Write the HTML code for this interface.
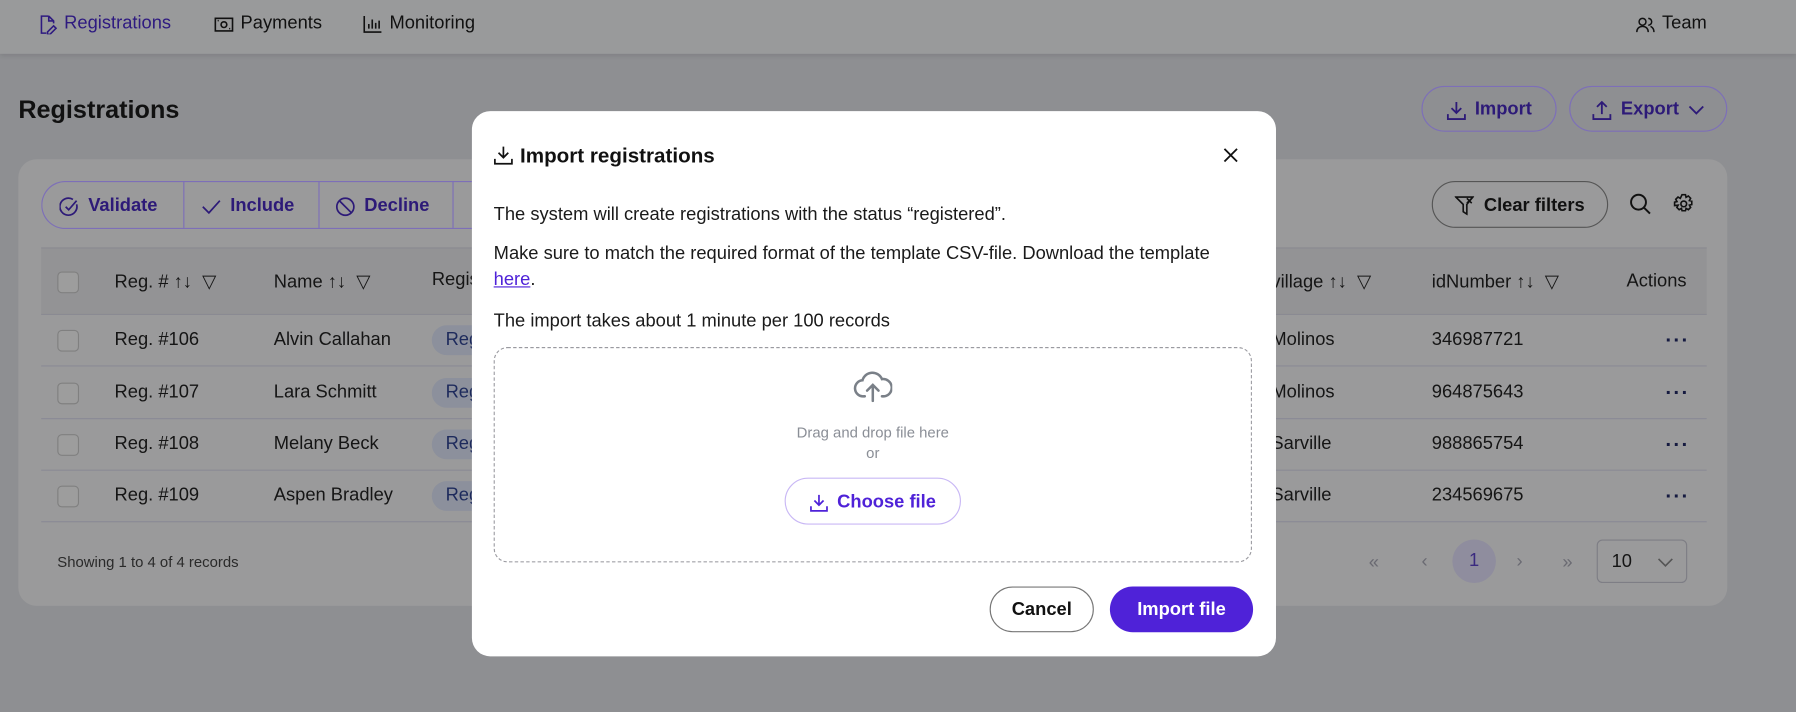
<!DOCTYPE html>
<html><head><meta charset="utf-8"><style>
html,body{margin:0;padding:0;width:1796px;height:712px;overflow:hidden;background:#8e8f92;font-family:"Liberation Sans",sans-serif}
#s{position:absolute;left:0;top:0;width:1568px;height:622px;transform:scale(1.14541);transform-origin:0 0;background:#8e8f92}
.a{position:absolute}
.nav{left:0;top:0;width:1568px;height:47px;background:#999a9b;box-shadow:0 2px 4px rgba(0,0,0,.1)}
.ni{position:absolute;top:12px;font-size:16px;color:#111;display:flex;align-items:center;gap:6px}
.pill{position:absolute;border:1px solid #7d6fb8;border-radius:22px;display:flex;align-items:center;justify-content:center;gap:8px;font-weight:bold;font-size:16px;color:#2d1a78;box-sizing:border-box;padding-top:2px}
.card{left:16px;top:139px;width:1492px;height:390px;background:#9a9a9b;border-radius:16px}
.th{left:36px;top:216px;width:1454px;height:57px;background:#939395;border-top:1px solid #8a8a92;border-bottom:1px solid #8a8a92}
.row{left:36px;width:1454px;height:45px;border-bottom:1px solid #8a8a95}
.t{position:absolute;font-size:16px;color:#151515;white-space:nowrap}
.cb{position:absolute;left:14px;width:17px;height:17px;border:1px solid #808080;border-radius:4px;background:#9d9d9d}
.tag{position:absolute;left:341px;top:10px;width:60px;height:26px;border-radius:13px;background:#8c909c;color:#1d2a5c;font-size:16px;line-height:26px;padding-left:12px;box-sizing:border-box}
.dots{position:absolute;left:1418px;font-size:18px;color:#151a40;font-weight:bold;letter-spacing:1px}
.modal{left:412px;top:97px;width:702px;height:476px;background:#fff;border-radius:16px}
.mt{position:absolute;font-size:16px;color:#1a1a1a;white-space:nowrap}
</style></head><body><div id="s">
<div class="a nav">
 <div class="ni" style="left:33px;color:#2e1a80"><svg width="17" height="17" viewBox="0 0 16 16" fill="none" stroke="#2e1a80" stroke-width="1.3"><path d="M9 1H3v14h4M9 1l4 4v2M9 1v4h4M8 14l5-5 2 2-5 5H8z"/></svg>Registrations</div>
 <div class="ni" style="left:187px"><svg width="17" height="15" viewBox="0 0 17 15" fill="none" stroke="#111" stroke-width="1.4"><rect x="1" y="2" width="15" height="11"/><circle cx="8.5" cy="7.5" r="2.5"/><path d="M3 4h1M13 11h1"/></svg>Payments</div>
 <div class="ni" style="left:317px"><svg width="17" height="16" viewBox="0 0 17 16" fill="none" stroke="#111" stroke-width="1.4"><path d="M1 1v14h15M5 12V8M8 12V4M11 12V7M14 12V5"/></svg>Monitoring</div>
 <div class="ni" style="left:1428px"><svg width="17" height="15" viewBox="0 0 17 15" fill="none" stroke="#111" stroke-width="1.3"><circle cx="6" cy="5" r="3"/><path d="M1 14c0-3 2-5 5-5s5 2 5 5M11 2a3 3 0 010 6M13 9c2 1 3 3 3 5"/></svg>Team</div>
</div>
<div class="a" style="left:16px;top:83px;font-size:22px;font-weight:bold;color:#111">Registrations</div>
<div class="pill" style="left:1241px;top:75px;width:118px;height:40px"><svg width="17" height="17" viewBox="0 0 16 16" fill="none" stroke="#2d1a78" stroke-width="1.5"><path d="M8 1v9M4 6l4 4 4-4M1 11v4h14v-4"/></svg>Import</div>
<div class="pill" style="left:1370px;top:75px;width:138px;height:40px"><svg width="17" height="17" viewBox="0 0 16 16" fill="none" stroke="#2d1a78" stroke-width="1.5"><path d="M8 11V2M4 5l4-4 4 4M1 11v4h14v-4"/></svg>Export<svg width="14" height="10" viewBox="0 0 14 10" fill="none" stroke="#2d1a78" stroke-width="1.6"><path d="M1 2l6 6 6-6"/></svg></div>
<div class="a card"></div>
<div class="a" style="left:36px;top:158px;width:400px;height:40px;border:1px solid #7d6fb8;border-radius:22px 0 0 22px;border-right:none"></div>
<div class="a" style="left:160px;top:158px;width:1px;height:41px;background:#7d6fb8"></div>
<div class="a" style="left:278px;top:158px;width:1px;height:41px;background:#7d6fb8"></div>
<div class="a" style="left:395px;top:158px;width:1px;height:41px;background:#7d6fb8"></div>
<div class="pill" style="left:52px;top:159px;height:40px;border:none"><svg width="17" height="17" viewBox="0 0 16 16" fill="none" stroke="#2d1a78" stroke-width="1.4"><path d="M14 6a7 7 0 11-3-4M5 8l2.5 2.5L14 3"/></svg>Validate</div>
<div class="pill" style="left:176px;top:159px;height:40px;border:none"><svg width="17" height="13" viewBox="0 0 16 12" fill="none" stroke="#2d1a78" stroke-width="1.4"><path d="M1 6l5 5L15 1"/></svg>Include</div>
<div class="pill" style="left:293px;top:159px;height:40px;border:none"><svg width="17" height="17" viewBox="0 0 16 16" fill="none" stroke="#2d1a78" stroke-width="1.4"><circle cx="8" cy="8" r="7"/><path d="M3 3l10 10"/></svg>Decline</div>
<div class="pill" style="left:1250px;top:158px;width:154px;height:41px;border-color:#555;color:#111"><svg width="17" height="17" viewBox="0 0 16 16" fill="none" stroke="#111" stroke-width="1.3"><path d="M1 1h14l-5 6v8l-3-2V7zM10 2l4 4M14 2l-4 4"/></svg>Clear filters</div>
<svg class="a" style="left:1422px;top:168px" width="20" height="20" viewBox="0 0 20 20" fill="none" stroke="#111" stroke-width="1.7"><circle cx="8.5" cy="8.5" r="6.5"/><path d="M13.5 13.5l5 5"/></svg>
<svg class="a" style="left:1461px;top:169px" width="18" height="18" viewBox="0 0 18 18" fill="none" stroke="#111" stroke-width="1.4"><circle cx="9" cy="9" r="2.5"/><path d="M7.5 1h3l.5 2.3 2-1.2 2 2-1.1 2 2.1.5v3l-2.1.5 1.1 2-2 2-2-1.2-.5 2.1h-3l-.5-2.1-2 1.2-2-2 1.1-2L1 10.5v-3l2.1-.5-1.1-2 2-2 2 1.2z"/></svg>
<div class="a th">
 <div class="cb" style="top:20px"></div>
 <div class="t" style="left:64px;top:19px">Reg. # ↑↓ &nbsp;▽</div>
 <div class="t" style="left:203px;top:19px">Name ↑↓ &nbsp;▽</div>
 <div class="t" style="left:341px;top:19px">Regis</div>
 <div class="t" style="left:1074px;top:19px">village ↑↓ &nbsp;▽</div>
 <div class="t" style="left:1214px;top:19px">idNumber ↑↓ &nbsp;▽</div>
 <div class="t" style="left:1384px;top:20px">Actions</div>
</div>
<div class="a row" style="top:274px"><div class="cb" style="top:14px"></div><div class="t" style="left:64px;top:14px">Reg. #106</div><div class="t" style="left:203px;top:14px">Alvin Callahan</div><div class="tag">Reg</div><div class="t" style="left:1074px;top:14px">Molinos</div><div class="t" style="left:1214px;top:14px">346987721</div><div class="dots" style="left:1418px;top:13px">···</div></div>
<div class="a row" style="top:320px"><div class="cb" style="top:14px"></div><div class="t" style="left:64px;top:14px">Reg. #107</div><div class="t" style="left:203px;top:14px">Lara Schmitt</div><div class="tag">Reg</div><div class="t" style="left:1074px;top:14px">Molinos</div><div class="t" style="left:1214px;top:14px">964875643</div><div class="dots" style="left:1418px;top:13px">···</div></div>
<div class="a row" style="top:365px"><div class="cb" style="top:14px"></div><div class="t" style="left:64px;top:14px">Reg. #108</div><div class="t" style="left:203px;top:14px">Melany Beck</div><div class="tag">Reg</div><div class="t" style="left:1074px;top:14px">Sarville</div><div class="t" style="left:1214px;top:14px">988865754</div><div class="dots" style="left:1418px;top:13px">···</div></div>
<div class="a row" style="top:410px"><div class="cb" style="top:14px"></div><div class="t" style="left:64px;top:14px">Reg. #109</div><div class="t" style="left:203px;top:14px">Aspen Bradley</div><div class="tag">Reg</div><div class="t" style="left:1074px;top:14px">Sarville</div><div class="t" style="left:1214px;top:14px">234569675</div><div class="dots" style="left:1418px;top:13px">···</div></div>
<div class="a" style="left:50px;top:483px;font-size:13px;color:#2a2a2a">Showing 1 to 4 of 4 records</div>
<div class="a" style="left:1195px;top:483px;font-size:16px;color:#6a6a72">«</div>
<div class="a" style="left:1241px;top:482px;font-size:16px;color:#6a6a72">‹</div>
<div class="a" style="left:1268px;top:471px;width:38px;height:38px;border-radius:50%;background:#8f8d9e;color:#3a2a80;font-size:16px;line-height:38px;text-align:center">1</div>
<div class="a" style="left:1324px;top:482px;font-size:16px;color:#6a6a72">›</div>
<div class="a" style="left:1364px;top:483px;font-size:16px;color:#6a6a72">»</div>
<div class="a" style="left:1394px;top:471px;width:79px;height:38px;border:1px solid #7e7e85;border-radius:5px;box-sizing:border-box"><span class="a" style="left:12px;top:10px;font-size:16px;color:#151515">10</span><svg class="a" style="left:52px;top:15px" width="14" height="9" viewBox="0 0 14 9" fill="none" stroke="#555" stroke-width="1.4"><path d="M1 1l6 6 6-6"/></svg></div>

<div class="a modal">
 <svg class="a" style="left:19px;top:30px" width="17" height="17" viewBox="0 0 16 16" fill="none" stroke="#111" stroke-width="1.4"><path d="M8 1v9M4 6l4 4 4-4M1 11v4h14v-4"/></svg>
 <div class="a" style="left:42px;top:29px;font-size:18px;font-weight:bold;color:#111">Import registrations</div>
 <svg class="a" style="left:656px;top:32px" width="13" height="13" viewBox="0 0 13 13" stroke="#111" stroke-width="1.6"><path d="M1 1l11 11M12 1L1 12"/></svg>
 <div class="mt" style="left:19px;top:82px">The system will create registrations with the status “registered”.</div>
 <div class="mt" style="left:19px;top:116px">Make sure to match the required format of the template CSV-file. Download the template</div>
 <div class="mt" style="left:19px;top:139px"><span style="color:#4f22d8;text-decoration:underline">here</span>.</div>
 <div class="mt" style="left:19px;top:175px">The import takes about 1 minute per 100 records</div>
 <div class="a" style="left:19px;top:206px;width:662px;height:188px;border:1px dashed #9a9aa0;border-radius:12px;box-sizing:border-box">
  <svg class="a" style="left:313px;top:18px" width="34" height="30" viewBox="0 0 34 30" fill="none" stroke="#7a8088" stroke-width="2.2" stroke-linecap="round"><path d="M10 24H9a7 7 0 01-1-14 9 9 0 0117-1 7.5 7.5 0 012 15h-2"/><path d="M17 28V15M12 19l5-5 5 5"/></svg>
  <div class="a" style="left:0;width:660px;top:65px;text-align:center;font-size:13px;color:#8a8e96;line-height:18px">Drag and drop file here<br>or</div>
  <div class="pill" style="left:253px;top:113px;width:154px;height:41px;border-color:#c9b8f5;color:#4f22d8"><svg width="16" height="16" viewBox="0 0 16 16" fill="none" stroke="#4f22d8" stroke-width="1.5"><path d="M8 1v9M4 6l4 4 4-4M1 11v4h14v-4"/></svg>Choose file</div>
 </div>
 <div class="pill" style="left:452px;top:415px;width:91px;height:40px;border-color:#777;color:#111">Cancel</div>
 <div class="pill" style="left:557px;top:415px;width:125px;height:40px;border:none;background:#4f22d8;color:#fff">Import file</div>
</div>
</div></body></html>
